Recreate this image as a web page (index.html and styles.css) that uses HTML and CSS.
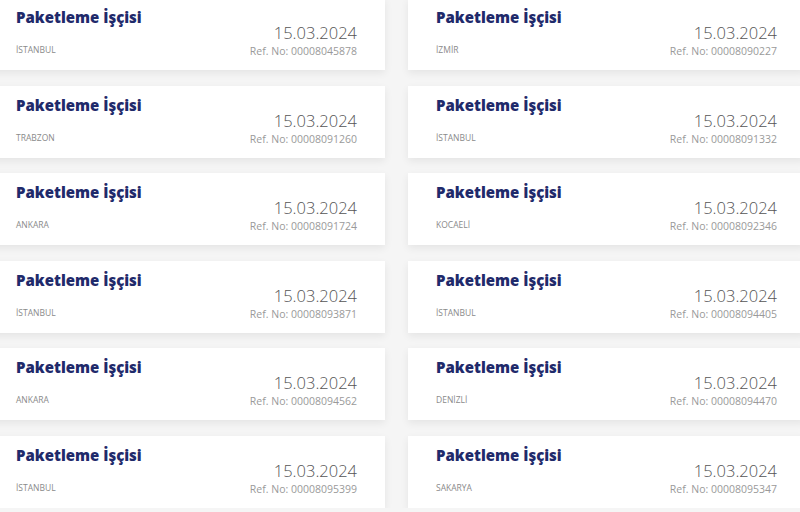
FILE: index.html
```html
<!DOCTYPE html>
<html lang="tr">
<head>
<meta charset="utf-8">
<link rel="stylesheet" href="styles.css">
</head>
<body>
<div class="grid">
  <div class="card"><div class="left"><div class="title">Paketleme İşçisi</div><div class="city">İSTANBUL</div></div><div class="right"><div class="date">15.03.2024</div><div class="ref">Ref. No: 00008045878</div></div></div>
  <div class="card"><div class="left"><div class="title">Paketleme İşçisi</div><div class="city">İZMİR</div></div><div class="right"><div class="date">15.03.2024</div><div class="ref">Ref. No: 00008090227</div></div></div>
  <div class="card"><div class="left"><div class="title">Paketleme İşçisi</div><div class="city">TRABZON</div></div><div class="right"><div class="date">15.03.2024</div><div class="ref">Ref. No: 00008091260</div></div></div>
  <div class="card"><div class="left"><div class="title">Paketleme İşçisi</div><div class="city">İSTANBUL</div></div><div class="right"><div class="date">15.03.2024</div><div class="ref">Ref. No: 00008091332</div></div></div>
  <div class="card"><div class="left"><div class="title">Paketleme İşçisi</div><div class="city">ANKARA</div></div><div class="right"><div class="date">15.03.2024</div><div class="ref">Ref. No: 00008091724</div></div></div>
  <div class="card"><div class="left"><div class="title">Paketleme İşçisi</div><div class="city">KOCAELİ</div></div><div class="right"><div class="date">15.03.2024</div><div class="ref">Ref. No: 00008092346</div></div></div>
  <div class="card"><div class="left"><div class="title">Paketleme İşçisi</div><div class="city">İSTANBUL</div></div><div class="right"><div class="date">15.03.2024</div><div class="ref">Ref. No: 00008093871</div></div></div>
  <div class="card"><div class="left"><div class="title">Paketleme İşçisi</div><div class="city">İSTANBUL</div></div><div class="right"><div class="date">15.03.2024</div><div class="ref">Ref. No: 00008094405</div></div></div>
  <div class="card"><div class="left"><div class="title">Paketleme İşçisi</div><div class="city">ANKARA</div></div><div class="right"><div class="date">15.03.2024</div><div class="ref">Ref. No: 00008094562</div></div></div>
  <div class="card"><div class="left"><div class="title">Paketleme İşçisi</div><div class="city">DENİZLİ</div></div><div class="right"><div class="date">15.03.2024</div><div class="ref">Ref. No: 00008094470</div></div></div>
  <div class="card"><div class="left"><div class="title">Paketleme İşçisi</div><div class="city">İSTANBUL</div></div><div class="right"><div class="date">15.03.2024</div><div class="ref">Ref. No: 00008095399</div></div></div>
  <div class="card"><div class="left"><div class="title">Paketleme İşçisi</div><div class="city">SAKARYA</div></div><div class="right"><div class="date">15.03.2024</div><div class="ref">Ref. No: 00008095347</div></div></div>
</div>
</body>
</html>
```

FILE: styles.css
```css
html, body {
  margin: 0;
  padding: 0;
  background: #f5f5f5;
  overflow: hidden;
  font-family: "Open Sans", "Liberation Sans", sans-serif;
}
.grid {
  display: grid;
  grid-template-columns: 397px 397px;
  column-gap: 23px;
  row-gap: 15.6px;
  margin-left: -12px;
  margin-top: -2px;
}
.card {
  background: #fff;
  height: 72px;
  box-sizing: border-box;
  padding: 9px 28px 10px 28px;
  display: flex;
  justify-content: space-between;
  box-shadow: 0 3px 8px rgba(0, 0, 0, 0.07);
}
.left {
  display: flex;
  flex-direction: column;
  justify-content: space-between;
}
.title {
  font-weight: 800;
  font-size: 15px;
  line-height: 20px;
  color: #1f2a6b;
}
.city {
  font-size: 8.5px;
  line-height: 14px;
  color: #8a8a8a;
  margin-bottom: 3px;
}
.right {
  display: flex;
  flex-direction: column;
  justify-content: flex-end;
  align-items: flex-end;
}
.date {
  font-weight: 300;
  font-size: 16.5px;
  line-height: 20px;
  color: #555;
}
.ref {
  font-size: 10.5px;
  line-height: 16px;
  color: #9a9a9a;
  margin-bottom: 1px;
}
```
